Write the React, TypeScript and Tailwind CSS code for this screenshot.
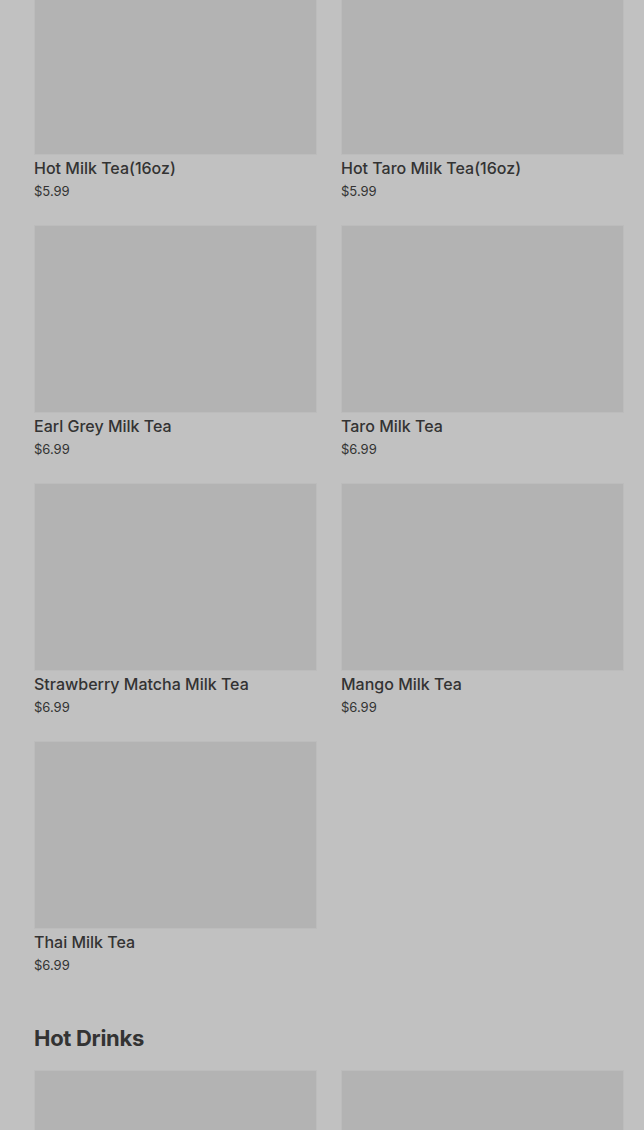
const milkTeas = [
  { name: "Hot Milk Tea(16oz)", price: "$5.99" },
  { name: "Hot Taro Milk Tea(16oz)", price: "$5.99" },
  { name: "Earl Grey Milk Tea", price: "$6.99" },
  { name: "Taro Milk Tea", price: "$6.99" },
  { name: "Strawberry Matcha Milk Tea", price: "$6.99" },
  { name: "Mango Milk Tea", price: "$6.99" },
  { name: "Thai Milk Tea", price: "$6.99" },
]

function ItemCard({ name, price }: { name: string; price: string }) {
  return (
    <div className="flex flex-col">
      <div className="h-[188px] w-full bg-[#b3b3b3] border border-[#bcbcbc]" />
      <div className="mt-[3px] text-[16px] leading-[20px] font-medium text-[#333333]">{name}</div>
      <div className="mt-1 text-[13px] leading-[18px] text-[#333333]">{price}</div>
    </div>
  )
}

export default function App() {
  return (
    <div
      className="h-[1130px] overflow-hidden bg-[#c1c1c1] pl-[34px] pr-[20px]"
      style={{ fontFamily: "Inter, 'Noto Sans', sans-serif" }}
    >
      <div className="-mt-[33px] grid grid-cols-2 gap-x-6 gap-y-[25px]">
        {milkTeas.map((item) => (
          <ItemCard key={item.name} name={item.name} price={item.price} />
        ))}
      </div>

      <h2 className="mt-[50px] text-[22px] leading-[28px] font-bold tracking-[-0.3px] text-[#333333]">Hot Drinks</h2>

      <div className="mt-[18px] grid grid-cols-2 gap-x-6">
        <div className="h-[188px] bg-[#b3b3b3] border border-[#bcbcbc]" />
        <div className="h-[188px] bg-[#b3b3b3] border border-[#bcbcbc]" />
      </div>
    </div>
  )
}
